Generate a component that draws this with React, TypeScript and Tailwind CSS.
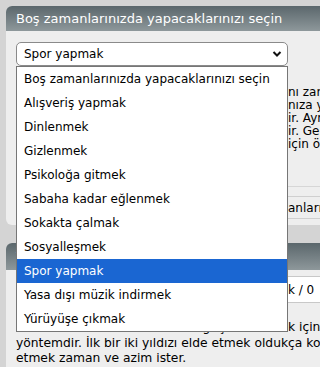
import React from 'react';

const options = [
  'Boş zamanlarınızda yapacaklarınızı seçin',
  'Alışveriş yapmak',
  'Dinlenmek',
  'Gizlenmek',
  'Psikoloğa gitmek',
  'Sabaha kadar eğlenmek',
  'Sokakta çalmak',
  'Sosyalleşmek',
  'Spor yapmak',
  'Yasa dışı müzik indirmek',
  'Yürüyüşe çıkmak',
];

const selected = 'Spor yapmak';

// line split in two parts: the head sits under the open list, the tail shows on the right
function SplitLine({ head, tail }: { head: string; tail: string }) {
  return (
    <p className="flex whitespace-nowrap">
      <span className="w-[272px] shrink-0 overflow-hidden">{head}</span>
      <span>{tail}</span>
    </p>
  );
}

export default function App() {
  return (
    <div className="w-[320px] h-[367px] overflow-hidden bg-[#d4d4d4] font-['DejaVu_Sans',Verdana,sans-serif] text-black">
      <div className="w-[360px] pl-[6px] pt-[6px]">
        {/* Panel 1 */}
        <div className="rounded-[6px] bg-[#eeeeee]">
          <div className="h-[25px] rounded-t-[6px] bg-gradient-to-b from-[#5b676c] to-[#8e989b] text-white text-[13px] pl-[10px] flex items-center">
            Boş zamanlarınızda yapacaklarınızı seçin
          </div>
          <div className="pl-[10px] pt-[11px] h-[194px] relative">
            <div className="relative z-10 w-[272px]">
              <div className="h-[24px] bg-white border border-[#8a8a8a] rounded-[5px] flex items-center justify-between pl-[7px] pr-[5px] text-[12px]">
                <span>{selected}</span>
                <svg width="10" height="10" viewBox="0 0 10 10">
                  <polyline points="1.5,3 5,6.5 8.5,3" fill="none" stroke="#111" strokeWidth="2" />
                </svg>
              </div>
              <ul className="absolute top-[24px] left-0 w-[272px] bg-white border border-[#767676] text-[12px]">
                {options.map(o => (
                  <li
                    key={o}
                    className={
                      'h-[24px] flex items-center pl-[7px] whitespace-nowrap ' +
                      (o === selected ? 'bg-[#1a66d2] text-white' : '')
                    }
                  >
                    {o}
                  </li>
                ))}
              </ul>
            </div>
            <div className="mt-[20px] text-[12px] leading-[13px]">
              <SplitLine head="Burada seçtiğiniz aktivite, karakterinizin boşta kala" tail="nı zamanını belirler." />
              <SplitLine head="Her aktivite farklı bir etki yaratır ve boş zama" tail="nıza yön verir." />
              <SplitLine head="Bazı aktiviteler size para kazandırabil" tail="ir. Ayrıca deneyim verir." />
              <SplitLine head="Bazıları ise risklidir ve yasal değild" tail="ir. Geri dönüşü yoktur." />
              <SplitLine head="Bu nedenle seçiminizi dikkatle yapmanız" tail=" için önemlidir." />
            </div>
            <div className="mt-[35px] border-t border-[#d6d6d6] pt-[9px]">
              <div className="h-[23px] border-t border-b border-[#cfcfcf] flex items-center text-[12px] whitespace-nowrap">
                <span className="w-[272px] shrink-0 overflow-hidden">Seçimi kaydet ve Boş zam</span>
                <span>anlarını güncelle</span>
              </div>
            </div>
          </div>
        </div>

        {/* Panel 2 */}
        <div className="mt-[18px] rounded-t-[6px] bg-[#eeeeee]">
          <div className="h-[27px] rounded-t-[6px] bg-gradient-to-b from-[#5b676c] to-[#8e989b] text-white text-[13px] pl-[10px] flex items-center">
            Yıldızlar
          </div>
          <div className="pl-[10px] pt-[6px] pb-[4px]">
            <div className="h-[27px] bg-white border border-[#c8c8c8] flex items-center text-[12px] whitespace-nowrap">
              <span className="w-[271px] shrink-0 overflow-hidden pl-[4px]">Kazanılan yıldız: 0 / Toplam puan: 0 / Kalan ha</span>
              <span>k / 0</span>
            </div>
            <div className="mt-[17px] text-[12.3px] leading-[15.5px] whitespace-nowrap">
              <SplitLine head="Yıldız kazanmak, karakterinizi güçlendirme" tail="k için en iyi" />
              <p>yöntemdir. İlk bir iki yıldızı elde etmek oldukça kolaydır, ancak</p>
              <p>etmek zaman ve azim ister.</p>
            </div>
          </div>
        </div>
      </div>
    </div>
  );
}
